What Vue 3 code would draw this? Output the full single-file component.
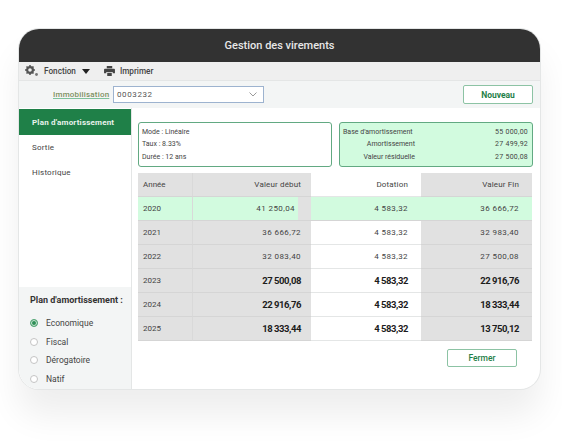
<template>
  <div class="page">
    <div class="window">
      <header class="title-bar">Gestion des virements</header>

      <div class="toolbar">
        <svg class="tool-icon gears" viewBox="0 0 14 12" width="14" height="12">
          <circle cx="5" cy="5" r="2.9" fill="none" stroke="#555" stroke-width="2.2" />
          <path d="M5 0v2M5 8v2M0 5h2M8 5h2M1.5 1.5l1.4 1.4M7.1 7.1l1.4 1.4M1.5 8.5l1.4-1.4M7.1 2.9l1.4-1.4" stroke="#555" stroke-width="1.5" />
          <circle cx="11.5" cy="9.5" r="1.4" fill="#777" />
        </svg>
        <span class="tool-label">Fonction</span>
        <span class="caret"></span>
        <svg class="tool-icon printer" viewBox="0 0 12 11" width="11" height="10">
          <path d="M3 0h6v2.500H3zM1 3h10a1 1 0 0 1 1 1v4H9.500V6.500h-7V8H0V4a1 1 0 0 1 1-1z" fill="#444" />
          <path d="M3.500 7.500h5V11h-5z" fill="#444" />
        </svg>
        <span class="tool-label">Imprimer</span>
      </div>

      <div class="filter-row">
        <span class="filter-label">Immobilisation</span>
        <div class="select">
          <span>0003232</span>
          <svg viewBox="0 0 8 5" width="8" height="5">
            <path d="M.5.500 4 4 7.500.500" fill="none" stroke="#9a9a9a" stroke-width="1" />
          </svg>
        </div>
        <button class="btn btn-new">Nouveau</button>
      </div>

      <div class="body">
        <aside class="sidebar">
          <nav class="menu">
            <div class="menu-item active">Plan d'amortissement</div>
            <div class="menu-item">Sortie</div>
            <div class="menu-item">Historique</div>
          </nav>
          <div class="plan">
            <div class="plan-title">Plan d'amortissement :</div>
            <label v-for="(opt, i) in plans" :key="opt" class="radio">
              <span class="dot" :class="{ on: i === 0 }"></span>
              {{ opt }}
            </label>
          </div>
        </aside>

        <main class="content">
          <div class="summary">
            <div class="box">
              <div>Mode : Linéaire</div>
              <div>Taux : 8.33%</div>
              <div>Durée : 12 ans</div>
            </div>
            <div class="box box-green">
              <div v-for="line in totals" :key="line.label" class="total-line">
                <span class="total-label">{{ line.label }}</span>
                <span class="total-value">{{ line.value }}</span>
              </div>
            </div>
          </div>

          <div class="table">
            <div class="cell head year">Année</div>
            <div class="cell head num">Valeur début</div>
            <div class="cell head num white">Dotation</div>
            <div class="cell head num">Valeur Fin</div>

            <template v-for="(row, i) in rows" :key="row[0]">
              <div class="cell year" :class="rowClass(i)">{{ row[0] }}</div>
              <div class="cell num" :class="rowClass(i)"><span class="val">{{ row[1] }}</span></div>
              <div class="cell num white" :class="rowClass(i)">{{ row[2] }}</div>
              <div class="cell num" :class="rowClass(i)">{{ row[3] }}</div>
            </template>
          </div>

          <div class="footer">
            <button class="btn btn-close">Fermer</button>
          </div>
        </main>
      </div>
    </div>
  </div>
</template>

<script setup>
const plans = ['Economique', 'Fiscal', 'Dérogatoire', 'Natif']

const totals = [
  { label: "Base d'amortissement", value: '55 000,00' },
  { label: 'Amortissement', value: '27 499,92' },
  { label: 'Valeur résiduelle', value: '27 500,08' },
]

const rows = [
  ['2020', '41 250,04', '4 583,32', '36 666,72'],
  ['2021', '36 666,72', '4 583,32', '32 983,40'],
  ['2022', '32 083,40', '4 583,32', '27 500,08'],
  ['2023', '27 500,08', '4 583,32', '22 916,76'],
  ['2024', '22 916,76', '4 583,32', '18 333,44'],
  ['2025', '18 333,44', '4 583,32', '13 750,12'],
]

const rowClass = (i) => ({ selected: i === 0, strong: i >= 3 })
</script>

<style>
body {
  background: #fff;
}
</style>

<style scoped>
.page {
  width: 562px;
  height: 445px;
  padding: 29px 0 0 19px;
  box-sizing: border-box;
  overflow: hidden;
  font-family: Roboto, "Liberation Sans", sans-serif;
  color: #333;
}

.window {
  width: 521px;
  height: 360px;
  display: flex;
  flex-direction: column;
  background: #fff;
  border-radius: 20px;
  overflow: hidden;
  box-shadow: 0 0 0 1px #e4e6e6, 0 26px 34px rgba(0, 0, 0, 0.07);
}

.title-bar {
  height: 33px;
  flex: none;
  display: flex;
  align-items: center;
  justify-content: center;
  background: #323232;
  color: #e8e8e8;
  font-size: 11px;
  font-weight: 500;
}

.toolbar {
  height: 19px;
  flex: none;
  display: flex;
  align-items: center;
  padding-left: 6px;
  background: #efefef;
  border-bottom: 1px solid #e4e6e6;
  font-size: 8.200px;
  font-weight: 500;
  color: #444;
  box-sizing: border-box;
}

.gears {
  margin-right: 5px;
}

.caret {
  width: 0;
  height: 0;
  margin: 1px 14px 0 6px;
  border-left: 4px solid transparent;
  border-right: 4px solid transparent;
  border-top: 5px solid #222;
}

.printer {
  margin-right: 5px;
}

.filter-row {
  height: 27px;
  flex: none;
  display: flex;
  align-items: center;
  padding: 0 7px 0 34px;
  background: #f3f5f5;
  font-size: 8px;
}

.filter-label {
  width: 53px;
  color: #7d8f5f;
  font-weight: 500;
  letter-spacing: 0.2px;
  text-decoration: underline;
  text-decoration-color: #7fc19c;
  white-space: nowrap;
}

.select {
  width: 151px;
  height: 17px;
  margin-left: 7px;
  padding: 0 6px 0 3px;
  display: flex;
  align-items: center;
  justify-content: space-between;
  box-sizing: border-box;
  background: #fff;
  border: 1px solid #9db3cf;
  color: #555;
  letter-spacing: 0.6px;
}

.btn {
  background: #fff;
  border: 1px solid #8cc3a4;
  border-radius: 2px;
  font-family: inherit;
  font-size: 8.500px;
  font-weight: 700;
  color: #1f7f49;
  padding: 0;
}

.btn-new {
  width: 70px;
  height: 19px;
  margin-left: auto;
}

.body {
  flex: 1;
  display: flex;
  min-height: 0;
}

.sidebar {
  width: 113px;
  flex: none;
  display: flex;
  flex-direction: column;
  justify-content: space-between;
  border-right: 1px solid #e4e6e6;
  box-sizing: border-box;
  background: #fff;
}

.menu {
  padding-top: 1px;
}

.menu-item {
  height: 25px;
  display: flex;
  align-items: center;
  padding-left: 13px;
  font-size: 8px;
  letter-spacing: 0.2px;
  color: #444;
}

.menu-item.active {
  height: 26px;
  background: #1f8048;
  color: #e8f3ec;
  font-weight: 700;
  letter-spacing: 0.2px;
}

.plan {
  height: 102px;
  padding: 8px 0 0 11px;
  box-sizing: border-box;
  background: #f3f5f5;
}

.plan-title {
  font-size: 9px;
  line-height: 10px;
  font-weight: 700;
  color: #333;
  margin-bottom: 9px;
}

.radio {
  height: 18.500px;
  display: flex;
  align-items: center;
  gap: 8px;
  font-size: 8.500px;
  color: #444;
}

.dot {
  width: 8px;
  height: 8px;
  flex: none;
  box-sizing: border-box;
  border: 1px solid #c4c4c4;
  border-radius: 50%;
  background: #fff;
}

.dot.on {
  border-color: #57a878;
  background: #2f8f57;
  box-shadow: inset 0 0 0 1px #cfe9d9;
}

.content {
  flex: 1;
  min-width: 0;
  padding: 14px 7px 0 6px;
}

.summary {
  display: grid;
  grid-template-columns: 194px 194px;
  gap: 7px;
}

.box {
  height: 45px;
  padding: 3px 4px 3px 3px;
  box-sizing: border-box;
  display: flex;
  flex-direction: column;
  justify-content: space-around;
  background: #fff;
  border: 1px solid #62a982;
  border-radius: 3px;
  font-size: 7px;
  color: #444;
}

.box-green {
  background: #d2fbdf;
}

.total-line {
  display: flex;
  justify-content: space-between;
}

.total-label {
  width: 72px;
  text-align: right;
  white-space: nowrap;
}

.total-value {
  letter-spacing: 0.25px;
}

.total-line:first-child .total-label {
  text-align: left;
}

.table {
  margin-top: 6px;
  display: grid;
  grid-template-columns: 55px 118px 110px 111px;
  grid-template-rows: 24px repeat(6, 24px);
}

.cell {
  display: flex;
  align-items: center;
  background: #e1e1e1;
  font-size: 8px;
  letter-spacing: 0.4px;
  color: #444;
  box-sizing: border-box;
  border-bottom: 1px solid #d5d5d5;
  white-space: nowrap;
}

.head {
  letter-spacing: 0.15px;
}

.year {
  padding-left: 5px;
  border-right: 1px solid #d9d9d9;
  letter-spacing: 0;
}

.num {
  justify-content: flex-end;
  padding-right: 10px;
}

.cell.num:nth-child(4n + 3),
.cell.num:nth-child(4n) {
  padding-right: 13px;
}

.white {
  background: #fff;
  border-bottom-color: #e4e6e6;
}

.selected {
  background: #d2fbdf;
  border-bottom-color: #d5d5d5;
}

.selected.num:nth-child(4n + 2) {
  background: linear-gradient(to right, #d2fbdf 105px, #e1e1e1 105px);
  padding-right: 16px;
}

.strong {
  font-size: 9.500px;
  font-weight: 700;
  color: #1c1c1c;
  letter-spacing: -0.45px;
}

.strong.year {
  font-size: 8px;
  font-weight: 400;
  color: #444;
  letter-spacing: 0;
}

.footer {
  display: flex;
  justify-content: flex-end;
  padding: 8px 16px 0 0;
}

.btn-close {
  width: 70px;
  height: 18px;
  font-weight: 500;
}
</style>
